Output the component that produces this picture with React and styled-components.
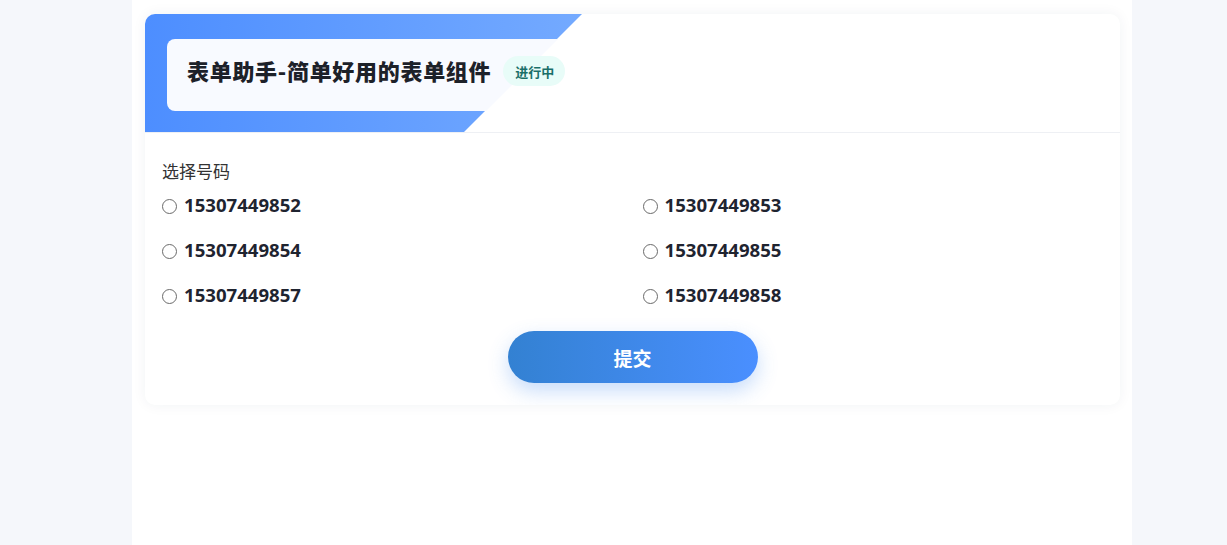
import React from "react";
import styled, { createGlobalStyle } from "styled-components";

const GlobalStyle = createGlobalStyle`
    * {
        box-sizing: border-box;
    }
    body {
        margin: 0;
        background: #f5f7fb;
        font-family: "Noto Sans", "Noto Sans CJK SC", sans-serif;
    }
`;

const Page = styled.div`
    width: 1000px;
    min-height: 100vh;
    margin-left: 132px;
    background: #ffffff;
    padding: 14px 12px 0 13px;
`;

const Card = styled.div`
    background: #ffffff;
    border-radius: 10px;
    overflow: hidden;
    box-shadow: 0 0 14px rgba(30, 50, 90, 0.06);
`;

const Header = styled.div`
    position: relative;
    display: flex;
    align-items: center;
    height: 119px;
    padding: 25px 22px 32px;
    border-bottom: 1px solid #eef0f4;

    &::before {
        content: "";
        position: absolute;
        left: 0;
        top: 0;
        width: 440px;
        height: 118px;
        background: linear-gradient(90deg, #4d8eff 0%, #74aaff 100%);
        clip-path: polygon(0 0, 437px 0, 319px 100%, 0 100%);
    }

    &::after {
        content: "";
        position: absolute;
        left: 22px;
        top: 25px;
        width: 400px;
        height: 72px;
        border-radius: 8px;
        background: #f8faff;
        clip-path: polygon(0 0, 391px 0, 319px 100%, 0 100%);
    }
`;

const TitleBox = styled.div`
    position: relative;
    z-index: 1;
    display: flex;
    align-items: center;
    gap: 12px;
    padding-left: 20px;
`;

const Title = styled.h1`
    margin: 0;
    font-family: "Noto Sans CJK SC", sans-serif;
    font-size: 22px;
    font-weight: 900;
    color: #1d2129;
    letter-spacing: 0.7px;
`;

const Badge = styled.span`
    display: inline-flex;
    align-items: center;
    height: 30px;
    padding: 0 11px 0 12px;
    border-radius: 15px;
    background: #e8fcf8;
    color: #1a6f68;
    font-family: "Noto Sans CJK SC", sans-serif;
    font-size: 13px;
    font-weight: 700;
    margin-top: 3px;
`;

const Body = styled.div`
    padding: 25px 17px 22px;
`;

const Label = styled.div`
    font-family: "Noto Sans CJK SC", sans-serif;
    font-size: 17px;
    color: #333333;
    line-height: 26px;
`;

const Options = styled.div`
    display: grid;
    grid-template-columns: 1fr 1fr;
    column-gap: 20px;
`;

const Option = styled.label`
    display: flex;
    align-items: center;
    height: 45px;
    margin-top: ${(p) => (p.$first ? "-2px" : "0")};
    cursor: pointer;
`;

const Radio = styled.input.attrs({ type: "radio" })`
    appearance: none;
    width: 15px;
    height: 15px;
    margin: 3px 7px 0 0;
    border: 1px solid #6a6a6a;
    border-radius: 50%;
    background: #fff;
`;

const Number = styled.span`
    font-family: "Noto Sans", sans-serif;
    font-size: 18.6px;
    font-weight: 700;
    color: #1f2430;
`;

const Actions = styled.div`
    display: flex;
    justify-content: center;
    margin-top: 14px;
`;

const SubmitButton = styled.button`
    width: 250px;
    height: 52px;
    border: none;
    border-radius: 26px;
    background: linear-gradient(90deg, #3381d2 0%, #4a8fff 100%);
    box-shadow: 0 8px 20px rgba(70, 140, 240, 0.3);
    color: #ffffff;
    font-family: "Noto Sans CJK SC", sans-serif;
    font-size: 19px;
    font-weight: 700;
    cursor: pointer;
`;

const numbers = [
    "15307449852",
    "15307449853",
    "15307449854",
    "15307449855",
    "15307449857",
    "15307449858",
];

const App = () => (
    <>
        <GlobalStyle />
        <Page>
            <Card>
                <Header>
                    <TitleBox>
                        <Title>表单助手-简单好用的表单组件</Title>
                        <Badge>进行中</Badge>
                    </TitleBox>
                </Header>
                <Body>
                    <Label>选择号码</Label>
                    <Options>
                        {numbers.map((n, i) => (
                            <Option key={n} $first={i < 2}>
                                <Radio name="phone" value={n} />
                                <Number>{n}</Number>
                            </Option>
                        ))}
                    </Options>
                    <Actions>
                        <SubmitButton>提交</SubmitButton>
                    </Actions>
                </Body>
            </Card>
        </Page>
    </>
);

export default App;
